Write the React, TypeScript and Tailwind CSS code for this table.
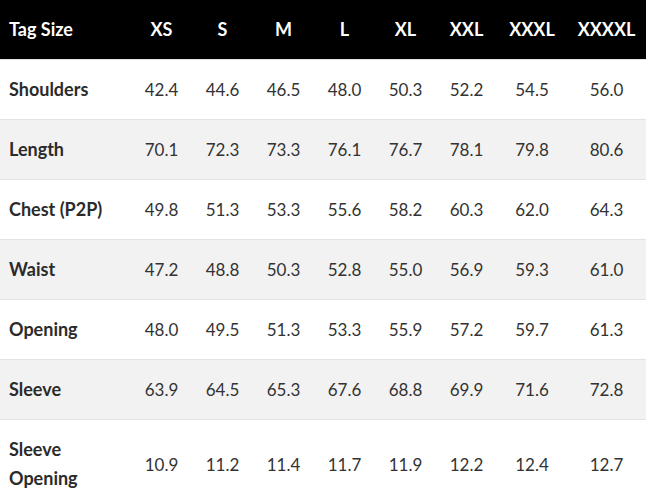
const sizes = ['XS', 'S', 'M', 'L', 'XL', 'XXL', 'XXXL', 'XXXXL'];

const rows: { label: string; values: string[] }[] = [
  { label: 'Shoulders', values: ['42.4', '44.6', '46.5', '48.0', '50.3', '52.2', '54.5', '56.0'] },
  { label: 'Length', values: ['70.1', '72.3', '73.3', '76.1', '76.7', '78.1', '79.8', '80.6'] },
  { label: 'Chest (P2P)', values: ['49.8', '51.3', '53.3', '55.6', '58.2', '60.3', '62.0', '64.3'] },
  { label: 'Waist', values: ['47.2', '48.8', '50.3', '52.8', '55.0', '56.9', '59.3', '61.0'] },
  { label: 'Opening', values: ['48.0', '49.5', '51.3', '53.3', '55.9', '57.2', '59.7', '61.3'] },
  { label: 'Sleeve', values: ['63.9', '64.5', '65.3', '67.6', '68.8', '69.9', '71.6', '72.8'] },
  { label: 'Sleeve Opening', values: ['10.9', '11.2', '11.4', '11.7', '11.9', '12.2', '12.4', '12.7'] },
];

const colWidths = ['w-[61px]', 'w-[61px]', 'w-[61px]', 'w-[61px]', 'w-[61px]', 'w-[61px]', 'w-[70px]', 'w-[79px]'];

export default function App() {
  return (
    <div className="w-[646px] h-[501px] overflow-hidden bg-white font-['Lato','Noto_Sans',sans-serif] text-[17px] leading-[29px] text-[#333]">
      <table className="w-[646px] table-fixed border-collapse">
        <colgroup>
          <col className="w-[131px]" />
          {colWidths.map((w, i) => (
            <col key={i} className={w} />
          ))}
        </colgroup>
        <thead>
          <tr className="bg-black text-white text-[18px]">
            <th className="pl-[9px] py-[15px] text-left font-bold">Tag Size</th>
            {sizes.map((s) => (
              <th key={s} className="py-[15px] text-center font-bold">
                {s}
              </th>
            ))}
          </tr>
        </thead>
        <tbody>
          {rows.map((row, i) => (
            <tr key={row.label} className={i % 2 === 1 ? 'bg-[#f2f2f2] border-t border-[#e3e3e3]' : 'bg-white border-t border-[#e3e3e3]'}>
              <td className="pl-[9px] pr-2 py-[15px] text-left text-[18px] font-bold text-[#2b2b2b]">
                {row.label === 'Sleeve Opening' ? (
                  <>
                    Sleeve
                    <br />
                    Opening
                  </>
                ) : (
                  row.label
                )}
              </td>
              {row.values.map((v, j) => (
                <td key={j} className="py-[15px] text-center">
                  {v}
                </td>
              ))}
            </tr>
          ))}
        </tbody>
      </table>
    </div>
  );
}
